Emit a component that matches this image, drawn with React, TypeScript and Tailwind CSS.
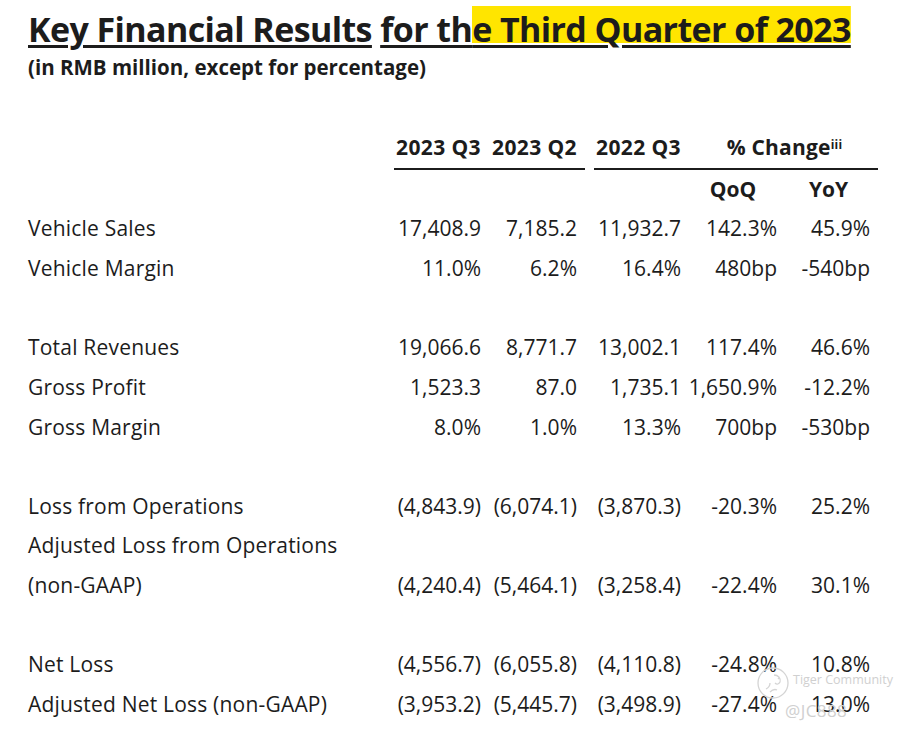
import React from "react"

type Row = { label?: string; values?: string[] }

const rows: Row[] = [
  { label: "Vehicle Sales", values: ["17,408.9", "7,185.2", "11,932.7", "142.3%", "45.9%"] },
  { label: "Vehicle Margin", values: ["11.0%", "6.2%", "16.4%", "480bp", "-540bp"] },
  {},
  { label: "Total Revenues", values: ["19,066.6", "8,771.7", "13,002.1", "117.4%", "46.6%"] },
  { label: "Gross Profit", values: ["1,523.3", "87.0", "1,735.1", "1,650.9%", "-12.2%"] },
  { label: "Gross Margin", values: ["8.0%", "1.0%", "13.3%", "700bp", "-530bp"] },
  {},
  { label: "Loss from Operations", values: ["(4,843.9)", "(6,074.1)", "(3,870.3)", "-20.3%", "25.2%"] },
  { label: "Adjusted Loss from Operations" },
  { label: "(non-GAAP)", values: ["(4,240.4)", "(5,464.1)", "(3,258.4)", "-22.4%", "30.1%"] },
  {},
  { label: "Net Loss", values: ["(4,556.7)", "(6,055.8)", "(4,110.8)", "-24.8%", "10.8%"] },
  { label: "Adjusted Net Loss (non-GAAP)", values: ["(3,953.2)", "(5,445.7)", "(3,498.9)", "-27.4%", "13.0%"] },
]

// faint "Tiger Community" watermark over the bottom right corner
function Watermark() {
  return (
    <div className="pointer-events-none absolute left-[756px] top-[666px] h-[60px] w-[140px] text-[#d0d0d0]">
      <svg width="34" height="34" viewBox="0 0 34 34" fill="none" stroke="#d4d4d4" strokeWidth="1.3">
        <circle cx="17" cy="17" r="15" />
        <path d="M10 23c2-1 4-3 4-6M14 26c2-2 5-3 7-2M18 9c4 0 7 3 6 7-1 2-3 3-5 1M22 12l1 1" />
      </svg>
      <span className="absolute left-[37px] top-[8px] whitespace-nowrap text-[12.5px] leading-none">Tiger Community</span>
      <span className="absolute left-[29px] top-[36px] whitespace-nowrap text-[17px] leading-none tracking-wide">@JC888</span>
    </div>
  )
}

export default function App() {
  return (
    <div className="relative h-[732px] w-[902px] overflow-hidden bg-white font-['Open_Sans',sans-serif] text-[#1c1c1c]">
      <div className="pl-[28px] pt-[7px]">
        <h1 className="text-[34px] font-bold leading-[44px] tracking-[-0.6px]">
          <span className="underline decoration-[3px] underline-offset-[3px]">Key Financial Results</span>{" "}
          <span className="underline decoration-[3px] underline-offset-[3px]">
            for th
            <span className="bg-[linear-gradient(#ffe500,#ffe500)] bg-[length:100%_37px] bg-top bg-no-repeat">
              e Third Quarter of 2023
            </span>
          </span>
        </h1>
        <p className="mt-[2px] text-[20.5px] font-bold leading-[28px]">(in RMB million, except for percentage)</p>
      </div>

      <div className="mt-[47px] grid grid-cols-[357px_96px_96px_104px_96px_93px] pl-[28px] text-[21px] leading-[39.65px]">
        {/* header */}
        <div />
        <div className="col-span-2 ml-[9px] -mr-[8px] flex border-b-2 border-[#1c1c1c] pr-[8px] font-bold tracking-[0.4px]">
          <span className="w-[87px] text-right">2023 Q3</span>
          <span className="w-[96px] text-right">2023 Q2</span>
        </div>
        <div className="col-span-3 ml-[17px] -mr-[8px] flex border-b-2 border-[#1c1c1c] font-bold tracking-[0.2px]">
          <span className="w-[87px] text-right tracking-[0.4px]">2022 Q3</span>
          <span className="flex-1 pl-[10px] text-center">
            % Change<sup className="text-[12px]">iii</sup>
          </span>
        </div>
        <div className="col-span-4" />
        <div className="pl-[8px] text-center font-bold">QoQ</div>
        <div className="pl-[10px] text-center font-bold">YoY</div>

        {rows.map((r, i) => (
          <React.Fragment key={i}>
            <div className="h-[39.65px] whitespace-nowrap tracking-[0.2px]">{r.label ?? ""}</div>
            {[0, 1, 2, 3, 4].map((c) => (
              <div key={c} className="h-[39.65px] whitespace-nowrap text-right">
                {r.values ? r.values[c] : ""}
              </div>
            ))}
          </React.Fragment>
        ))}
      </div>
      <Watermark />
    </div>
  )
}
